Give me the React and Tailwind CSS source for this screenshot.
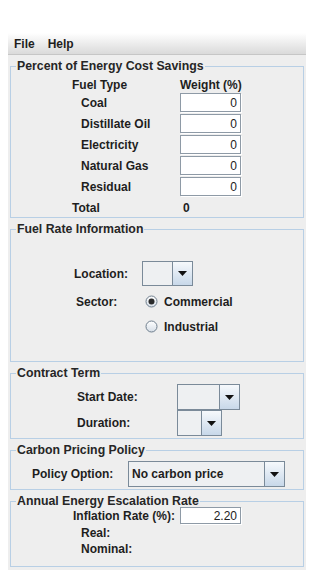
import React from "react";

const FONT = { fontFamily: '"Liberation Sans", Arial, sans-serif' };

function Arrow() {
  return (
    <svg width="9" height="5" viewBox="0 0 9 5">
      <path d="M0 0 H9 L4.5 5 Z" fill="#111" />
    </svg>
  );
}

function Combo({ w, h, text }) {
  return (
    <div className={`flex border border-[#7a8a99] bg-[#eef0f2] ${w} ${h}`}>
      <div className="flex-1 flex items-center pl-[3px] text-[12px] font-bold text-[#1e1e1e] leading-none">
        {text}
      </div>
      <div className="w-[20px] border-l border-[#7a8a99] bg-gradient-to-b from-[#f6f9fc] to-[#c8d8e9] flex items-center justify-center">
        <Arrow />
      </div>
    </div>
  );
}

function Field({ value, h = "h-[19px]" }) {
  return (
    <div
      className={`w-[61px] ${h} bg-white border border-[#8e9aa6] shadow-[1px_1px_0_#ffffff] flex items-center justify-end pr-[3px] text-[12px] font-normal text-[#222] leading-none`}
    >
      {value}
    </div>
  );
}

function Radio({ checked }) {
  return (
    <svg width="13" height="13" viewBox="0 0 13 13">
      <defs>
        <linearGradient id="rg" x1="0" y1="0" x2="0" y2="1">
          <stop offset="0" stopColor="#ffffff" />
          <stop offset="1" stopColor="#d5dde6" />
        </linearGradient>
      </defs>
      <circle cx="6.5" cy="6.5" r="5.5" fill="url(#rg)" stroke="#6f7e8d" strokeWidth="1" />
      {checked && <circle cx="6.5" cy="6.5" r="3" fill="#2a2a2a" />}
    </svg>
  );
}

function Group({ title, h, children }) {
  return (
    <fieldset className={`border border-[#b8cfe5] ${h} min-w-0`}>
      <legend className="ml-[5px] px-[1px] text-[12.3px] font-bold leading-[14px] text-[#262626]">
        {title}
      </legend>
      {children}
    </fieldset>
  );
}

export default function App() {
  const fuels = ["Coal", "Distillate Oil", "Electricity", "Natural Gas", "Residual"];
  return (
    <div className="w-[316px] h-[579px] bg-white pt-[33px] pl-[8px]" style={FONT}>
      <div className="w-[298px] h-[537px] bg-[#eeeeee] flex flex-col text-[#1e1e1e]">
        <div className="h-[22px] bg-gradient-to-b from-white to-[#dadada] border-b border-[#c6c6c6] flex items-center pl-[6px] gap-[13px] text-[12px] font-bold">
          <span>File</span>
          <span>Help</span>
        </div>
        <div className="flex flex-col px-[2px] pt-[4px] gap-[4px] text-[12px] font-bold">
          <Group title="Percent of Energy Cost Savings" h="h-[159px]">
            <div className="pl-[61px] flex flex-col">
              <div className="flex h-[14px] mt-[5px] items-center leading-none">
                <div className="w-[108px]">Fuel Type</div>
                <div>Weight (%)</div>
              </div>
              {fuels.map((f) => (
                <div key={f} className="flex h-[21px] items-center leading-none">
                  <div className="w-[108px] pl-[9px]">{f}</div>
                  <Field value="0" />
                </div>
              ))}
              <div className="flex h-[14px] mt-[4px] items-center leading-none">
                <div className="w-[108px]">Total</div>
                <div className="pl-[3px]">0</div>
              </div>
            </div>
          </Group>

          <Group title="Fuel Rate Information" h="h-[140px]">
            <div className="flex flex-col">
              <div className="flex items-center mt-[25px] pl-[63px] leading-none">
                <div className="w-[68px]">Location:</div>
                <Combo w="w-[51px]" h="h-[25px]" />
              </div>
              <div className="flex items-center h-[25px] mt-[3px] pl-[65px] leading-none">
                <div className="w-[69px]">Sector:</div>
                <Radio checked />
                <span className="ml-[6px]">Commercial</span>
              </div>
              <div className="flex items-center h-[25px] pl-[134px] leading-none">
                <Radio />
                <span className="ml-[6px]">Industrial</span>
              </div>
            </div>
          </Group>

          <Group title="Contract Term" h="h-[73px]">
            <div className="flex flex-col mt-[4px] pl-[66px] leading-none">
              <div className="flex items-center">
                <div className="w-[100px]">Start Date:</div>
                <Combo w="w-[63px]" h="h-[26px]" />
              </div>
              <div className="flex items-center">
                <div className="w-[100px]">Duration:</div>
                <Combo w="w-[45px]" h="h-[26px]" />
              </div>
            </div>
          </Group>

          <Group title="Carbon Pricing Policy" h="h-[47px]">
            <div className="flex items-center mt-[4px] pl-[21px] leading-none">
              <div className="w-[96px]">Policy Option:</div>
              <Combo w="w-[157px]" h="h-[26px]" text="No carbon price" />
            </div>
          </Group>

          <Group title="Annual Energy Escalation Rate" h="h-[73px]">
            <div className="flex flex-col pl-[62px] leading-none">
              <div className="flex items-center mt-[-1px] h-[17px]">
                <div className="w-[107px]">Inflation Rate (%):</div>
                <Field value="2.20" h="h-[17px]" />
              </div>
              <div className="h-[14px] mt-[2px] pl-[8px] flex items-center">Real:</div>
              <div className="h-[14px] mt-[2px] pl-[8px] flex items-center">Nominal:</div>
            </div>
          </Group>
        </div>
      </div>
    </div>
  );
}
